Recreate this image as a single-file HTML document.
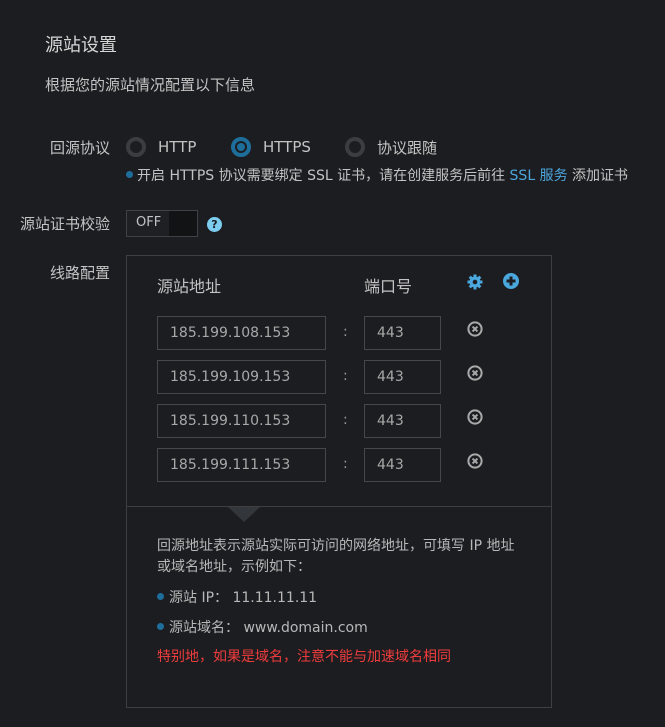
<!DOCTYPE html>
<html><head><meta charset="utf-8"><style>
*{margin:0;padding:0;box-sizing:border-box}
body{width:665px;height:727px;background:#1c1d20;color:#c3c3c3;font-family:"DejaVu Sans","Noto Sans CJK SC",sans-serif;font-size:14px;position:relative;overflow:hidden}
.a{position:absolute;white-space:nowrap}
.lbl{position:absolute;right:555px;text-align:right;white-space:nowrap;font-size:15px;color:#c3c3c3}
.radio{position:absolute;width:20px;height:20px;border-radius:50%;border:4px solid #3b3d40}
.radio.on{border-color:#1e6e9c}
.radio.on::after{content:"";position:absolute;left:2px;top:2px;width:8px;height:8px;border-radius:50%;background:#1e6e9c}
.dot{display:inline-block;width:7px;height:7px;border-radius:50%;background:#1e6e9c;margin-right:5px;vertical-align:2px}
.inp{position:absolute;height:34px;border:1px solid #45474a;background:#1c1d20;color:#a8a8a8;font-size:14px;line-height:32px;padding-left:12px}
.x{position:absolute;width:16px;height:16px}
</style></head><body>
<div class="a" style="left:45px;top:31px;font-size:18px;color:#d6d6d6">源站设置</div>
<div class="a" style="left:45px;top:74px;font-size:15px">根据您的源站情况配置以下信息</div>

<div class="lbl" style="top:137px">回源协议</div>
<div class="radio" style="left:126px;top:137px"></div>
<div class="a" style="left:158px;top:138px;font-size:15px">HTTP</div>
<div class="radio on" style="left:231px;top:137px"></div>
<div class="a" style="left:263px;top:138px;font-size:15px">HTTPS</div>
<div class="radio" style="left:345px;top:137px"></div>
<div class="a" style="left:377px;top:137px;font-size:15px">协议跟随</div>
<div class="a" style="left:126px;top:165px;font-size:14px"><span class="dot" style="margin-right:4px"></span>开启 HTTPS 协议需要绑定 SSL 证书，请在创建服务后前往 <span style="color:#4da6dd">SSL 服务</span> 添加证书</div>

<div class="lbl" style="top:213px">源站证书校验</div>
<div class="a" style="left:126px;top:210px;width:72px;height:27px;border:1px solid #3f4144;background:#1f2023"><div style="position:absolute;right:0;top:0;width:28px;height:25px;background:#121314"></div><span style="position:absolute;left:9px;top:4px;font-size:13px">OFF</span></div>
<div class="a" style="left:207px;top:217px;width:15px;height:15px;border-radius:50%;background:#7dcdf0;color:#1c1d20;font-size:11px;font-weight:bold;text-align:center;line-height:15px">?</div>

<div class="lbl" style="top:262px">线路配置</div>
<div class="a" style="left:126px;top:255px;width:426px;height:453px;border:1px solid #3d3f42"></div>
<div class="a" style="left:126px;top:506px;width:426px;height:1px;background:#3d3f42"></div>
<div class="a" style="left:228px;top:507px;width:0;height:0;border-left:16px solid transparent;border-right:16px solid transparent;border-top:15px solid #33363a"></div>

<div class="a" style="left:157px;top:273px;font-size:16px">源站地址</div>
<div class="a" style="left:364px;top:273px;font-size:16px">端口号</div>
<svg class="a" style="left:467px;top:274px" width="16" height="16" viewBox="0 0 16 16"><g fill="#4aa8de"><circle cx="8" cy="8" r="5.5"/><rect x="6.5" y="0.5" width="3" height="15"/><rect x="0.5" y="6.5" width="15" height="3"/><rect x="6.5" y="0.5" width="3" height="15" transform="rotate(45 8 8)"/><rect x="6.5" y="0.5" width="3" height="15" transform="rotate(-45 8 8)"/></g><circle cx="8" cy="8" r="2.3" fill="#1c1d20"/></svg>
<svg class="a" style="left:503px;top:273px" width="16" height="16" viewBox="0 0 16 16"><circle cx="8" cy="8" r="8" fill="#4aa8de"/><rect x="6.5" y="3.5" width="3" height="9" fill="#1c1d20"/><rect x="3.5" y="6.5" width="9" height="3" fill="#1c1d20"/></svg>

<div class="inp" style="left:157px;top:316px;width:169px">185.199.108.153</div>
<div class="a" style="left:343px;top:324px;color:#999">:</div>
<div class="inp" style="left:364px;top:316px;width:77px">443</div>
<svg class="x" style="left:467px;top:321px" viewBox="0 0 16 16"><circle cx="8" cy="8" r="6.6" fill="none" stroke="#aaa" stroke-width="2"/><path d="M5.6 5.6L10.4 10.4M10.4 5.6L5.6 10.4" stroke="#aaa" stroke-width="2"/></svg>

<div class="inp" style="left:157px;top:360px;width:169px">185.199.109.153</div>
<div class="a" style="left:343px;top:368px;color:#999">:</div>
<div class="inp" style="left:364px;top:360px;width:77px">443</div>
<svg class="x" style="left:467px;top:365px" viewBox="0 0 16 16"><circle cx="8" cy="8" r="6.6" fill="none" stroke="#aaa" stroke-width="2"/><path d="M5.6 5.6L10.4 10.4M10.4 5.6L5.6 10.4" stroke="#aaa" stroke-width="2"/></svg>

<div class="inp" style="left:157px;top:404px;width:169px">185.199.110.153</div>
<div class="a" style="left:343px;top:412px;color:#999">:</div>
<div class="inp" style="left:364px;top:404px;width:77px">443</div>
<svg class="x" style="left:467px;top:409px" viewBox="0 0 16 16"><circle cx="8" cy="8" r="6.6" fill="none" stroke="#aaa" stroke-width="2"/><path d="M5.6 5.6L10.4 10.4M10.4 5.6L5.6 10.4" stroke="#aaa" stroke-width="2"/></svg>

<div class="inp" style="left:157px;top:448px;width:169px">185.199.111.153</div>
<div class="a" style="left:343px;top:456px;color:#999">:</div>
<div class="inp" style="left:364px;top:448px;width:77px">443</div>
<svg class="x" style="left:467px;top:453px" viewBox="0 0 16 16"><circle cx="8" cy="8" r="6.6" fill="none" stroke="#aaa" stroke-width="2"/><path d="M5.6 5.6L10.4 10.4M10.4 5.6L5.6 10.4" stroke="#aaa" stroke-width="2"/></svg>

<div class="a" style="left:157px;top:536px;font-size:14px;line-height:21px;color:#b8b8b8">回源地址表示源站实际可访问的网络地址，可填写 IP 地址<br>或域名地址，示例如下：</div>
<div class="a" style="left:157px;top:587px;font-size:14px;color:#b8b8b8"><span class="dot" style="margin-right:5px"></span>源站 IP： 11.11.11.11</div>
<div class="a" style="left:157px;top:617px;font-size:14px;color:#b8b8b8"><span class="dot" style="margin-right:5px"></span>源站域名： www.domain.com</div>
<div class="a" style="left:157px;top:646px;font-size:14px;color:#ee3c3c">特别地，如果是域名，注意不能与加速域名相同</div>
</body></html>
